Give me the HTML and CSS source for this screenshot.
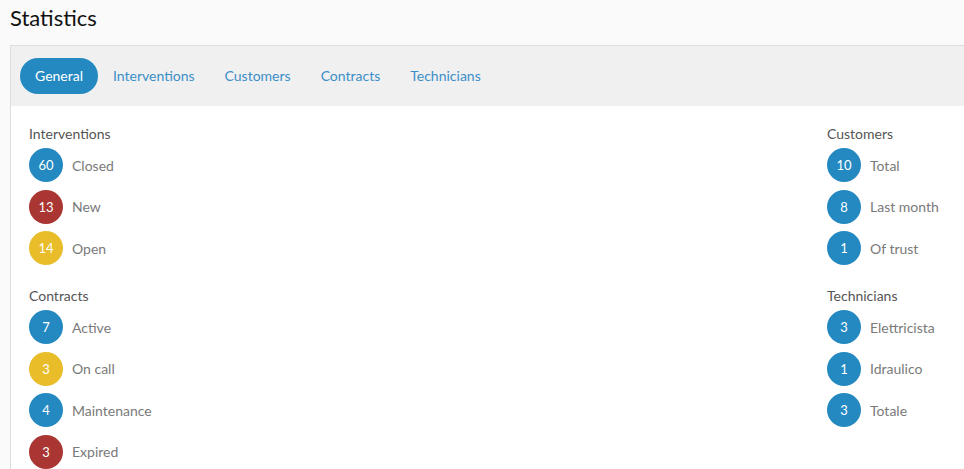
FILE: index.html
```html
<!DOCTYPE html>
<html>
<head>
<meta charset="utf-8">
<link rel="stylesheet" href="styles.css">
</head>
<body>
<h1 class="title">Statistics</h1>
<div class="card">
  <nav class="tabs">
    <span class="tab active">General</span>
    <span class="tab">Interventions</span>
    <span class="tab">Customers</span>
    <span class="tab">Contracts</span>
    <span class="tab">Technicians</span>
  </nav>
  <div class="content">
    <div class="col">
      <div class="group">
        <div class="ghead">Interventions</div>
        <div class="row"><span class="badge blue">60</span><span class="label">Closed</span></div>
        <div class="row"><span class="badge red">13</span><span class="label">New</span></div>
        <div class="row"><span class="badge yellow">14</span><span class="label">Open</span></div>
      </div>
      <div class="group">
        <div class="ghead">Contracts</div>
        <div class="row"><span class="badge blue">7</span><span class="label">Active</span></div>
        <div class="row"><span class="badge yellow">3</span><span class="label">On call</span></div>
        <div class="row"><span class="badge blue">4</span><span class="label">Maintenance</span></div>
        <div class="row"><span class="badge red">3</span><span class="label">Expired</span></div>
      </div>
    </div>
    <div class="col">
      <div class="group">
        <div class="ghead">Customers</div>
        <div class="row"><span class="badge blue">10</span><span class="label">Total</span></div>
        <div class="row"><span class="badge blue">8</span><span class="label">Last month</span></div>
        <div class="row"><span class="badge blue">1</span><span class="label">Of trust</span></div>
      </div>
      <div class="group">
        <div class="ghead">Technicians</div>
        <div class="row"><span class="badge blue">3</span><span class="label">Elettricista</span></div>
        <div class="row"><span class="badge blue">1</span><span class="label">Idraulico</span></div>
        <div class="row"><span class="badge blue">3</span><span class="label">Totale</span></div>
      </div>
    </div>
  </div>
</div>
</body>
</html>
```
FILE: styles.css
```css
html, body {
  margin: 0;
  padding: 0;
  background: #fafafa;
  overflow: hidden;
  font-family: Lato, "Open Sans", sans-serif;
}
body {
  padding: 0 0 0 10px;
  width: 1200px;
}
.title {
  margin: 0;
  padding-top: 4px;
  height: 41px;
  font-size: 22px;
  font-weight: 400;
  color: #111;
  line-height: 28px;
}
.card {
  border: 1px solid #dddddd;
  border-right: none;
  background: #fff;
  width: 1100px;
}
.tabs {
  display: flex;
  align-items: center;
  background: #f0f0f0;
  height: 60px;
  padding-left: 9px;
}
.tab {
  font-size: 14px;
  color: #3a8fc8;
  padding: 0 15px;
  height: 36px;
  line-height: 36px;
  border-radius: 18px;
}
.tab.active {
  background: #2489c0;
  color: #fff;
}
.content {
  display: grid;
  grid-template-columns: 798px auto;
  padding: 18px 0 10px 18px;
}
.group { margin-bottom: 21px; }
.ghead {
  font-size: 14px;
  color: #555;
  line-height: 20px;
  margin-bottom: 4px;
}
.row {
  display: flex;
  align-items: center;
  height: 34px;
  margin-bottom: 7.5px;
}
.badge {
  width: 34px;
  height: 34px;
  border-radius: 50%;
  color: #fff;
  font-size: 13px;
  display: flex;
  align-items: center;
  justify-content: center;
  flex-shrink: 0;
}
.blue { background: #2489c0; }
.red { background: #a93632; }
.yellow { background: #e9bd2a; }
.label {
  margin-left: 9px;
  font-size: 14px;
  color: #7a7a7a;
}
```
